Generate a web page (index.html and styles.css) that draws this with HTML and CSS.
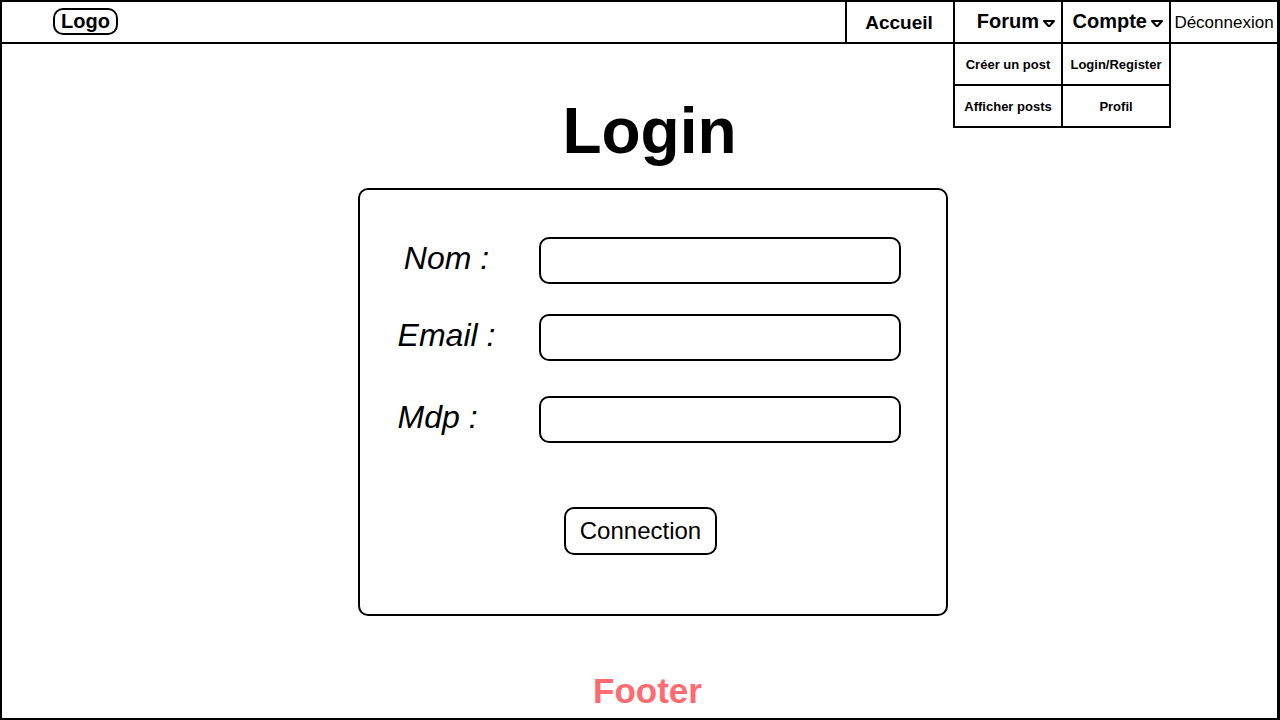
FILE: index.html
```html
<!DOCTYPE html>
<html lang="fr">
<head>
<meta charset="utf-8">
<meta name="viewport" content="width=device-width, initial-scale=1">
<title>Login</title>
<link rel="stylesheet" href="styles.css">
</head>
<body>
<div class="page">
  <header class="topbar">
    <a class="logo" href="#">Logo</a>
    <nav class="nav">
      <div class="nav-item"><a class="nav-link" href="#">Accueil</a></div>
      <div class="nav-item">
        <button class="nav-toggle" type="button" aria-expanded="true">Forum
          <svg class="caret" width="14" height="9" viewBox="0 0 14 9" aria-hidden="true"><path d="M2 2H12L8 6.5Q7 7.5 6 6.5Z"/></svg>
        </button>
        <div class="menu">
          <a class="menu-link" href="#">Créer un post</a>
          <a class="menu-link" href="#">Afficher posts</a>
        </div>
      </div>
      <div class="nav-item">
        <button class="nav-toggle" type="button" aria-expanded="true">Compte
          <svg class="caret" width="14" height="9" viewBox="0 0 14 9" aria-hidden="true"><path d="M2 2H12L8 6.5Q7 7.5 6 6.5Z"/></svg>
        </button>
        <div class="menu menu-last">
          <a class="menu-link" href="#">Login/Register</a>
          <a class="menu-link" href="#">Profil</a>
        </div>
      </div>
      <div class="nav-item"><a class="nav-link nav-logout" href="#">Déconnexion</a></div>
    </nav>
  </header>
  <main class="main">
    <h1 class="title">Login</h1>
    <form class="card">
      <div class="field">
        <label class="label" for="nom">Nom :</label>
        <input class="input" id="nom" type="text">
      </div>
      <div class="field">
        <label class="label" for="email">Email :</label>
        <input class="input" id="email" type="email">
      </div>
      <div class="field field-password">
        <label class="label" for="mdp">Mdp :</label>
        <input class="input" id="mdp" type="password">
      </div>
      <div class="actions"><button class="submit" type="submit">Connection</button></div>
    </form>
  </main>
  <footer class="footer">Footer</footer>
</div>
</body>
</html>
```

FILE: styles.css
```css
* {
  box-sizing: border-box;
}

body {
  margin: 0;
  background: #fff;
  color: #000;
  font-family: "Liberation Sans", Arial, sans-serif;
}

a {
  color: inherit;
  text-decoration: none;
}

button,
input {
  margin: 0;
  background: none;
  color: inherit;
  font: inherit;
}

.page {
  display: flex;
  flex-direction: column;
  min-height: 100vh;
  border: 2px solid #000;
  border-right-width: 3px;
}

.topbar {
  display: flex;
  justify-content: space-between;
  align-items: stretch;
  height: 42px;
  border-bottom: 2px solid #000;
}

.logo {
  align-self: flex-start;
  margin: 6px 0 0 51px;
  padding: 0 6px;
  border: 2px solid #000;
  border-radius: 10px;
  font-size: 20px;
  font-weight: bold;
  line-height: 23px;
}

.nav {
  display: flex;
}

.nav-item {
  position: relative;
  width: 108px;
  border-left: 2px solid #000;
}

.nav-link,
.nav-toggle {
  display: flex;
  align-items: center;
  justify-content: center;
  width: 100%;
  height: 100%;
  padding-top: 2px;
  font-size: 19px;
  font-weight: bold;
}

.nav-link {
  padding-right: 2px;
}

.nav-toggle {
  justify-content: flex-end;
  gap: 3px;
  padding: 0 5px 2px 0;
  border: 0;
  font-size: 20px;
}

.nav-logout {
  padding-right: 0;
  font-size: 17px;
  font-weight: normal;
}

.caret {
  flex: none;
  margin-top: 5px;
  fill: none;
  stroke: #000;
  stroke-width: 2;
  stroke-linejoin: round;
}

.menu {
  position: absolute;
  top: 100%;
  left: -2px;
  width: 108px;
  border: solid #000;
  border-width: 2px 0 0 2px;
}

.menu-last {
  width: 110px;
  border-right-width: 2px;
}

.menu-link {
  display: flex;
  align-items: center;
  justify-content: center;
  height: 42px;
  border-bottom: 2px solid #000;
  font-size: 13px;
  font-weight: bold;
}

.main {
  padding: 50px 0 24px 26px;
}

.title {
  margin: 0 0 20px;
  padding-right: 6px;
  font-size: 64px;
  line-height: 74px;
  text-align: center;
}

.card {
  width: min(590px, 100%);
  margin: 0 auto;
  padding: 47px 45px 59px 38px;
  border: 2px solid #000;
  border-radius: 10px;
}

.field {
  display: grid;
  grid-template-columns: 98px 1fr;
  align-items: center;
  column-gap: 43px;
  margin-bottom: 30px;
}

.label {
  padding-bottom: 5px;
  font-size: 32px;
  font-style: italic;
  line-height: 36px;
  text-align: center;
  white-space: nowrap;
}

.field-password {
  margin: 35px 0 64px;
}

.field-password .label {
  text-align: left;
}

.input {
  width: 100%;
  height: 47px;
  padding: 0 12px;
  border: 2px solid #000;
  border-radius: 10px;
  font-size: 24px;
}

.actions {
  padding-right: 17px;
  text-align: center;
}

.submit {
  display: block;
  margin: 0 auto;
  padding: 0 14px;
  border: 2px solid #000;
  border-radius: 10px;
  font-size: 24px;
  line-height: 44px;
}

.footer {
  margin-top: auto;
  padding: 0 0 7px 16px;
  color: #ff6b70;
  font-size: 35px;
  font-weight: bold;
  line-height: 40px;
  text-align: center;
}
```
